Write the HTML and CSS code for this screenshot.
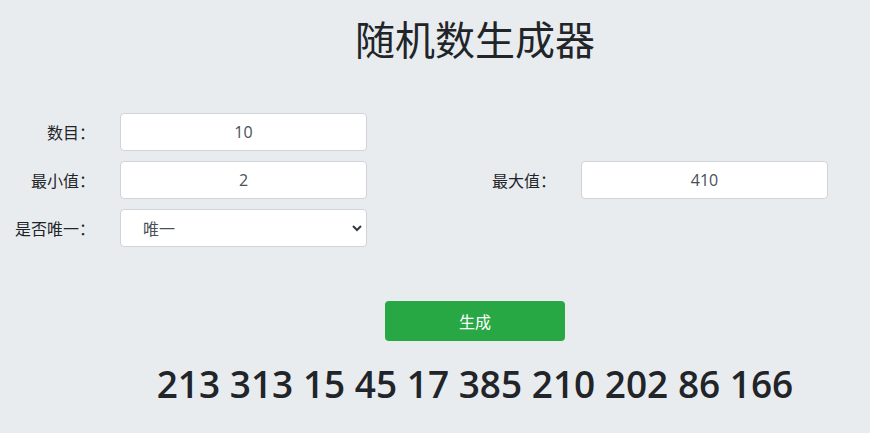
FILE: index.html
```html
<!DOCTYPE html>
<html lang="zh-CN">
<head>
  <meta charset="UTF-8" />
  <title>随机数生成器</title>
  <link rel="stylesheet" href="styles.css">
</head>
<body>
<div class="page">
  <h1 class="title">随机数生成器</h1>

  <form class="form" onsubmit="return false;">
    <label class="lbl" for="count">数目：</label>
    <input class="ctl" id="count" type="text" value="10">
    <div class="empty"></div>
    <div class="empty"></div>

    <label class="lbl" for="min">最小值：</label>
    <input class="ctl" id="min" type="text" value="2">
    <label class="lbl" for="max">最大值：</label>
    <input class="ctl" id="max" type="text" value="410">

    <label class="lbl" for="unique">是否唯一：</label>
    <div class="select-wrap">
      <select class="ctl sel" id="unique">
        <option>唯一</option>
        <option>不唯一</option>
      </select>
      <svg class="chev" width="10" height="8" viewBox="0 0 10 8"><path d="M1 2 L5 6 L9 2" fill="none" stroke="#343a40" stroke-width="2"/></svg>
    </div>
  </form>

  <div class="actions">
    <button class="btn" type="button">生成</button>
  </div>

  <div class="result">213 313 15 45 17 385 210 202 86 166</div>
</div>
</body>
</html>
```

FILE: styles.css
```css
html, body { margin: 0; padding: 0; background: #e9ecef; color: #212529; font-family: "Open Sans", "Noto Sans CJK SC", sans-serif; }
.page { width: 870px; height: 433px; overflow: hidden; }
/* content column is centred a little right of the window, as in the original */
.title, .actions, .result { padding-left: 80px; }
.title { margin: 0; padding-top: 10px; height: 56px; text-align: center; font-family: "Noto Sans CJK SC", sans-serif; font-weight: 400; font-size: 40px; line-height: 56px; }
.form { display: grid; grid-template-columns: 95px 247px 164px 247px; column-gap: 25px; row-gap: 10px; margin-top: 47px; }
.lbl { font-family: "Noto Sans CJK JP", "Noto Sans CJK SC", sans-serif; font-size: 16px; text-align: right; line-height: 38px; }
.ctl { box-sizing: border-box; width: 247px; height: 38px; border: 1px solid #ced4da; border-radius: 4px; background: #fff; color: #495057; font-family: "Open Sans", "Noto Sans CJK SC", sans-serif; font-size: 16px; text-align: center; padding: 0 12px; outline: none; }
.select-wrap { position: relative; width: 247px; height: 38px; }
.sel { appearance: none; -webkit-appearance: none; text-align: left; padding-left: 22px; font-family: "Noto Sans CJK SC", sans-serif; }
.chev { position: absolute; right: 5px; top: 15px; pointer-events: none; }
.actions { display: flex; justify-content: center; margin-top: 54px; }
.btn { width: 180px; height: 40px; border: none; border-radius: 4px; background: #28a745; color: #fff; font-family: "Noto Sans CJK SC", sans-serif; font-size: 16px; cursor: pointer; }
.result { text-align: center; margin-top: 18px; font-family: "Open Sans", sans-serif; font-weight: 600; font-size: 37px; line-height: 50px; }
```
